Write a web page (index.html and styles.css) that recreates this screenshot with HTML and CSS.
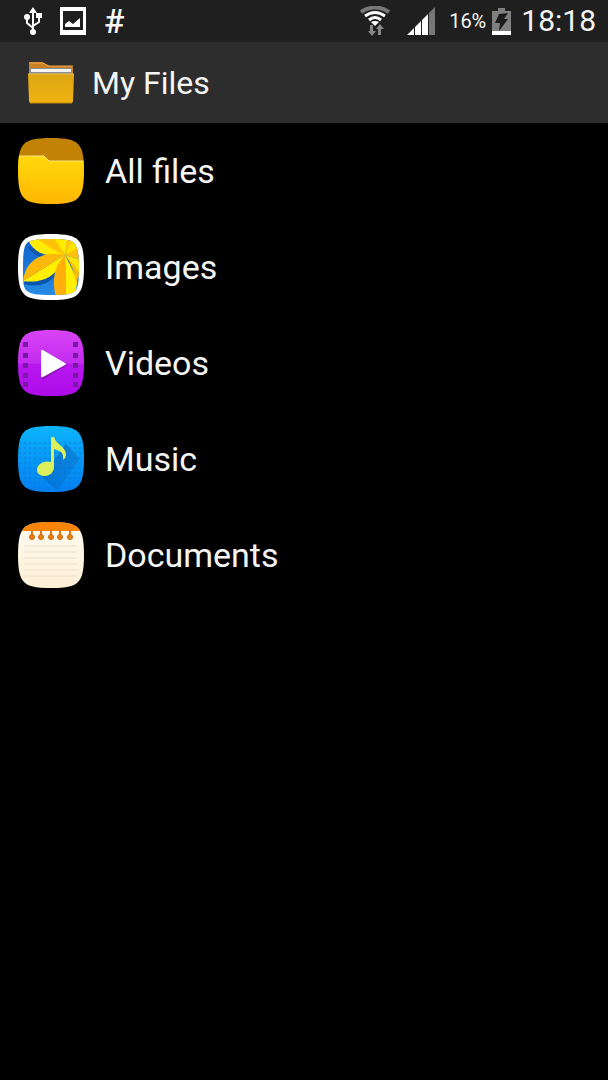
FILE: index.html
```html
<!DOCTYPE html>
<html lang="en">
<head>
<meta charset="utf-8">
<meta name="viewport" content="width=device-width, initial-scale=1">
<title>My Files</title>
<link rel="stylesheet" href="styles.css">
</head>
<body>
<div class="statusbar">
	<div class="notifications">
		<svg class="usb" width="18" height="28" viewBox="0 0 18 28">
			<path fill="none" stroke="#fff" stroke-width="2" d="M9 4v20M3 10v6l6 5M15 9v6l-6 4"/>
			<path fill="#fff" d="M9 0l4 6H5zM12 6h6v5h-6z"/>
			<circle fill="#fff" cx="3" cy="10" r="3"/>
			<circle fill="#fff" cx="9" cy="25" r="3"/>
		</svg>
		<svg class="shot" width="26" height="28" viewBox="0 0 26 28">
			<path fill="#fff" fill-rule="evenodd" d="M0 0h26v28H0zM3 4v19h20V4z"/>
			<path fill="#fff" d="M5 20v-3l4-3 4 3 7-6v9z"/>
		</svg>
		<span class="hash">#</span>
	</div>
	<div class="system">
		<svg class="wifi" width="30" height="30" viewBox="0 0 30 30" fill="none">
			<path stroke="#777" stroke-width="4" d="M1 6Q15-3 29 6"/>
			<path stroke="#fff" stroke-width="3" d="M5 10Q15 3 25 10M9 14Q15 9 21 14"/>
			<path fill="#fff" d="M11 16Q15 14 19 16L15 20z"/>
			<path fill="#888" d="M10 19h3v6h3l-4 5-4-5h2zM18 29h3v-6h3l-4-5-4 5h2z"/>
		</svg>
		<svg class="signal" width="28" height="28" viewBox="0 0 28 28">
			<path fill="#fff" d="M0 28l7-7v7zM8 20l6-6v14H8zM15 13l6-6v21h-6z"/>
			<path fill="#777" d="M22 6l6-6v28h-6z"/>
		</svg>
		<span class="percent">16%</span>
		<svg class="battery" width="19" height="27" viewBox="0 0 19 27">
			<path fill="#808080" d="M0 3h6V0h7v3h6v20H0z"/>
			<path fill="#fff" d="M0 23h19v4H0z"/>
			<path fill="#1b1b1b" d="M7 6l9-1-4 6h4L7 23l1-8H3z"/>
		</svg>
		<time class="clock">18:18</time>
	</div>
</div>
<header class="titlebar">
	<svg width="48" height="44" viewBox="0 0 48 44">
		<defs>
			<linearGradient id="front" x2="0" y2="1"><stop stop-color="#dfa513"/><stop offset="1" stop-color="#efb312"/></linearGradient>
		</defs>
		<path fill="#c98122" d="M2 3q0-2 2-2h11l7 4h22q2 0 2 2v12H2z"/>
		<path fill="none" stroke="#efa654" d="M2 2h14l6 3h24"/>
		<path fill="#8d8d8d" d="M3 7h42v7H3z"/>
		<path fill="#f4f4f4" d="M4 8h40v3H4z"/>
		<path fill="url(#front)" d="M1 13h46l-1 27q0 2-2 2H4q-2 0-2-2z"/>
		<path stroke="#efc352" d="M1 13h46"/>
		<path stroke="#c58a08" d="M3 42h42"/>
	</svg>
	<h1>My Files</h1>
</header>
<nav>
<ul class="categories">
	<li><a href="#files">
		<svg class="icon" viewBox="0 0 66 66">
			<defs>
				<clipPath id="tile"><path d="M33 0C49 0 56 2 60 6S66 17 66 33 64 56 60 60 49 66 33 66 10 64 6 60 0 49 0 33 2 10 6 6 17 0 33 0z"/></clipPath>
				<linearGradient id="yellow" x2="0" y2="1"><stop stop-color="#ffd90b"/><stop offset="1" stop-color="#ffb602"/></linearGradient>
			</defs>
			<g clip-path="url(#tile)">
				<path fill="#c28205" d="M0 0h66v30H0z"/>
				<path fill="url(#yellow)" d="M0 18h26l5 5h35v43H0z"/>
				<path fill="none" stroke="#ffe680" d="M0 18h26l5 5h35"/>
			</g>
		</svg>
		<span>All files</span>
	</a></li>
	<li><a href="#images">
		<svg class="icon" viewBox="0 0 66 66">
			<defs>
				<clipPath id="photo"><path d="M33 5C48 5 53 6 56 9S61 18 61 33 60 54 57 57 48 61 33 61 13 60 9 57 5 48 5 33 6 12 9 9 18 5 33 5z"/></clipPath>
				<linearGradient id="sky" x2="0" y2="1"><stop stop-color="#0b5fcb"/><stop offset="1" stop-color="#2a8ee6"/></linearGradient>
			</defs>
			<g clip-path="url(#tile)"><path fill="#fff" d="M0 0h66v66H0z"/></g>
			<g clip-path="url(#photo)">
				<path fill="url(#sky)" d="M0 0h66v66H0z"/>
				<path fill="#0c56b0" d="M5 50q14 4 25-2 6-4 9-10L24 30zM9 12q8 12 17 11l14-2z"/>
				<path fill="#ffec00" d="M47 21C34 23 17 23 9 4h14z"/>
				<path fill="#ffc20a" d="M47 21C38 17 27 12 19 4h19z"/>
				<path fill="#ffec00" d="M47 21L36 4h14z"/>
				<path fill="#ffc80a" d="M47 21l2-17h9z"/>
				<path fill="#ffe600" d="M47 21L56 4h7v10z"/>
				<path fill="#ffc00b" d="M47 21l16-9v14z"/>
				<path fill="#ffb90b" d="M47 21C28 17 8 23 5 47z"/>
				<path fill="#fff000" d="M47 21C41 41 26 50 5 47z"/>
				<path fill="#ffb00b" d="M47 21C35 33 34 49 38 63h10z"/>
				<path fill="#fff000" d="M47 21l1 42h7q5-12 4-18z"/>
				<path fill="#ffb80a" d="M47 21q9 12 11 27l5-9z"/>
				<path fill="#ffe600" d="M47 21l16 5v14z"/>
			</g>
		</svg>
		<span>Images</span>
	</a></li>
	<li><a href="#videos">
		<svg class="icon" viewBox="0 0 66 66">
			<defs>
				<linearGradient id="purple" x2="0" y2="1"><stop stop-color="#d944f6"/><stop offset=".5" stop-color="#c42bf0"/><stop offset=".52" stop-color="#b817ee"/><stop offset="1" stop-color="#ae0bea"/></linearGradient>
			</defs>
			<g clip-path="url(#tile)"><path fill="url(#purple)" d="M0 0h66v66H0z"/></g>
			<path fill="#7719a5" d="M5 12h5v5H5zM5 23h5v5H5zM5 33h5v5H5zM5 43h5v5H5zM5 52h5v5H5zM55 12h5v5h-5zM55 23h5v5h-5zM55 33h5v5h-5zM55 43h5v5h-5zM55 52h5v5h-5z"/>
			<path fill="#8a13b8" d="M24 21q0-2 2-1l22 14q1 1 0 2L26 49q-2 1-2-1z"/>
			<path fill="#fff" d="M23 21q0-2 2-1l22 13q2 1 0 2L25 47q-2 1-2-1z"/>
		</svg>
		<span>Videos</span>
	</a></li>
	<li><a href="#music">
		<svg class="icon" viewBox="0 0 66 66">
			<defs>
				<linearGradient id="blue" x2="0" y2="1"><stop stop-color="#0cb4fb"/><stop offset="1" stop-color="#0380f0"/></linearGradient>
				<linearGradient id="shade" x2="1" y2="1"><stop stop-color="#0767bd"/><stop offset="1" stop-color="#0767bd" stop-opacity="0"/></linearGradient>
				<pattern id="dots" width="5" height="5" patternUnits="userSpaceOnUse"><circle cx="2" cy="2" r="1.500" fill="#0a72dc" fill-opacity=".35"/></pattern>
			</defs>
			<g clip-path="url(#tile)">
				<path fill="url(#blue)" d="M0 0h66v66H0z"/>
				<path fill="url(#dots)" d="M0 15h66v51H0z"/>
				<path fill="url(#shade)" d="M22 49l16-17 10-14 14 15L39 65z"/>
			</g>
			<path fill="#dcf05c" d="M33 11h3c2 8 12 9 12 18q0 3-3 5c1-8-3-9-9-11v18c0 5-4 9-9 9-4 0-8-2-8-6 0-6 7-10 14-8z"/>
		</svg>
		<span>Music</span>
	</a></li>
	<li><a href="#documents">
		<svg class="icon" viewBox="0 0 66 66">
			<defs>
				<linearGradient id="paper" x2="0" y2="1"><stop stop-color="#fffaf0"/><stop offset="1" stop-color="#fff0d6"/></linearGradient>
			</defs>
			<g clip-path="url(#tile)">
				<path fill="url(#paper)" d="M0 0h66v66H0z"/>
				<path fill="#f98407" d="M0 0h66v9H0z"/>
			</g>
			<path stroke="#e9e0cd" d="M6 24h53M6 30h53M6 36h53M6 42h53M6 48h53M6 54h53"/>
			<path stroke="#e67813" stroke-width="2" d="M14 8v6M23 8v6M33 8v6M42 8v6M52 8v6"/>
			<g fill="#ee7d12" stroke="#c96a13">
				<circle cx="14" cy="15" r="2.500"/><circle cx="23" cy="15" r="2.500"/><circle cx="33" cy="15" r="2.500"/><circle cx="42" cy="15" r="2.500"/><circle cx="52" cy="15" r="2.500"/>
			</g>
		</svg>
		<span>Documents</span>
	</a></li>
</ul>
</nav>
</body>
</html>
```
FILE: styles.css
```css
body
{
	margin: 0;
	background-color: #000;
	color: #f5f5f5;
	font-family: Roboto, "Liberation Sans", sans-serif;
}
svg
{
	display: block;
	flex: none;
}
.statusbar
{
	display: flex;
	justify-content: space-between;
	height: 42px;
	padding: 0 12px 0 24px;
	background-color: #1f1f1f;
}
.notifications, .system
{
	display: flex;
	align-items: center;
}
.notifications
{
	gap: 18px;
}
.hash
{
	font-size: 34px;
	font-weight: 500;
	line-height: 42px;
}
.signal
{
	margin: 0 14px 0 17px;
}
.percent
{
	font-size: 20px;
}
.battery
{
	margin: 0 10px 0 6px;
}
.clock
{
	font-size: 30px;
	line-height: 42px;
}
.titlebar
{
	display: flex;
	align-items: center;
	gap: 17px;
	height: 81px;
	padding: 0 27px;
	background-color: #2d2d2d;
}
.titlebar h1
{
	margin: 0;
	font-size: 32px;
	font-weight: 400;
}
.categories
{
	margin: 0;
	padding: 0;
	list-style: none;
}
.categories a
{
	display: flex;
	align-items: center;
	gap: 21px;
	height: 96px;
	padding: 0 18px;
	color: inherit;
	font-size: 34px;
	text-decoration: none;
}
.icon
{
	width: 66px;
	height: 66px;
}
```
